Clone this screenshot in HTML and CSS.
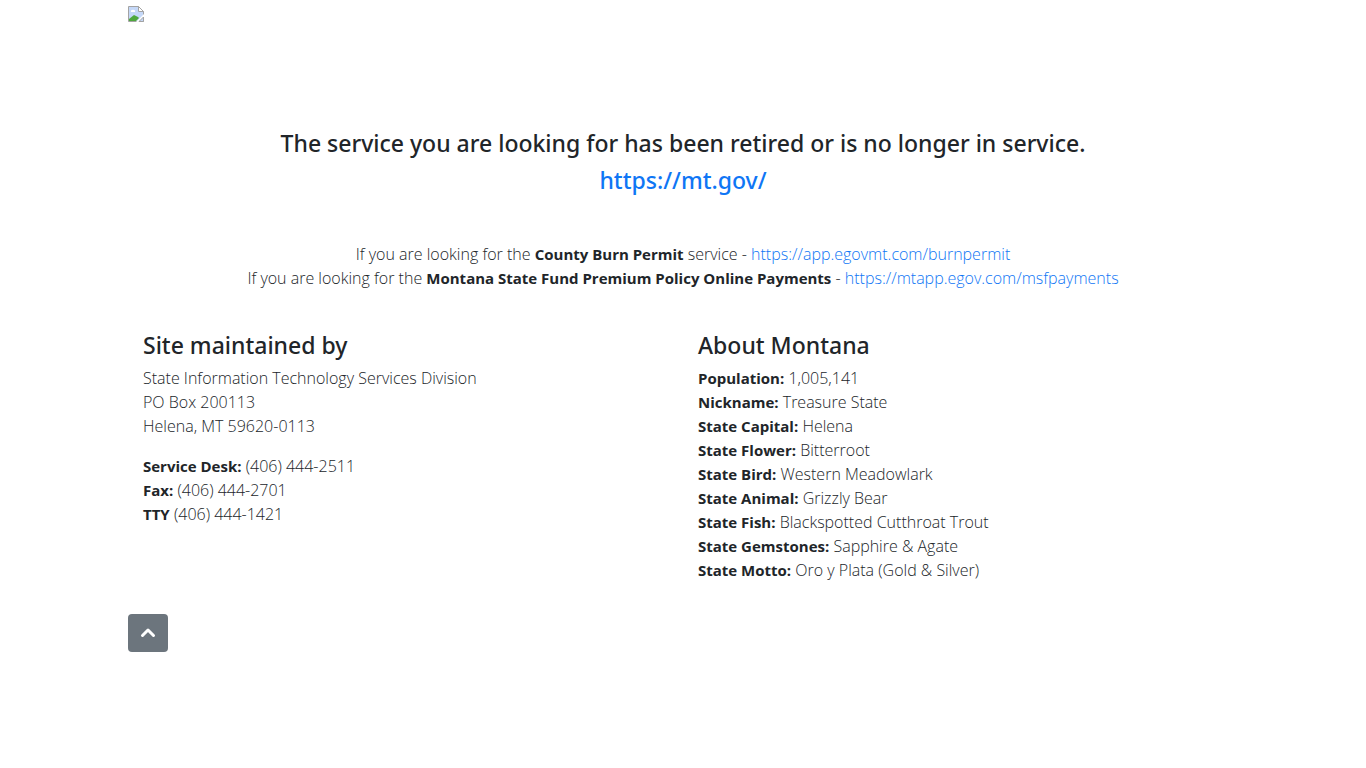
FILE: index.html
```html
<!DOCTYPE html>
<html lang="en">
<head>
	<title>Service Retired</title>
	<meta charset="utf-8">
	<meta name="viewport" content="width=device-width, initial-scale=1">
	<link rel="stylesheet" href="styles.css">
</head>
<body>
	<div class="container" id="top">
		<header class="header">
			<svg class="logo" viewBox="0 0 16 16" width="16" height="16" role="img" aria-label="Logo">
				<path d="M.5 .5h10l5 5v10H.5z" fill="#c5d8f8" stroke="#a3a3a3"/>
				<path d="M10.500 .5v5h5z" fill="#fff" stroke="#a3a3a3"/>
				<path d="M3 6a1.500 1.500 0 0 1 2-2 1.500 1.500 0 0 1 2 2z" fill="#fff"/>
				<path d="M1 15v-2l5-4 4 2 1 1-3 3z" fill="#4fa83d"/>
				<path d="M8 16l8-8v3l-5 5z" fill="#fff"/>
				<path d="M11 15.500h4.500V11z" fill="#c5d8f8" stroke="#a3a3a3"/>
			</svg>
		</header>

		<div class="message">
			<h1>The service you are looking for has been retired or is no longer in service.</h1>
			<h1><a href="https://mt.gov/">https://mt.gov/</a></h1>
		</div>

		<p class="services">
			If you are looking for the <b>County Burn Permit</b> service - <a href="https://app.egovmt.com/burnpermit">https://app.egovmt.com/burnpermit</a><br>
			If you are looking for the <b>Montana State Fund Premium Policy Online Payments</b> - <a href="https://mtapp.egov.com/msfpayments">https://mtapp.egov.com/msfpayments</a>
		</p>

		<footer class="row">
			<div class="col">
				<h2>Site maintained by</h2>
				<p>
					State Information Technology Services Division<br>
					PO Box 200113<br>
					Helena, MT 59620-0113
				</p>
				<p>
					<b>Service Desk:</b> (406) 444-2511<br>
					<b>Fax:</b> (406) 444-2701<br>
					<b>TTY</b> (406) 444-1421
				</p>
			</div>
			<div class="col">
				<h2>About Montana</h2>
				<p>
					<b>Population:</b> 1,005,141<br>
					<b>Nickname:</b> Treasure State<br>
					<b>State Capital:</b> Helena<br>
					<b>State Flower:</b> Bitterroot<br>
					<b>State Bird:</b> Western Meadowlark<br>
					<b>State Animal:</b> Grizzly Bear<br>
					<b>State Fish:</b> Blackspotted Cutthroat Trout<br>
					<b>State Gemstones:</b> Sapphire &amp; Agate<br>
					<b>State Motto:</b> Oro y Plata (Gold &amp; Silver)
				</p>
			</div>
		</footer>

		<button type="button" class="btn-top" aria-label="Back to top" onclick="window.scrollTo(0, 0)">
			<svg viewBox="0 0 16 16" width="16" height="16" aria-hidden="true">
				<path d="M2.500 10.500L8 5l5.500 5.500" fill="none" stroke="#fff" stroke-width="3" stroke-linecap="round" stroke-linejoin="round"/>
			</svg>
		</button>
	</div>
</body>
</html>
```

FILE: styles.css
```css
* {
	box-sizing: border-box;
}

body {
	margin: 0;
	font-family: "Open Sans", "Noto Sans", sans-serif;
	font-size: 16px;
	font-weight: 300;
	line-height: 24px;
	color: #212529;
	background-color: #fff;
}

a {
	color: #0f76f5;
	text-decoration: none;
}

a:hover {
	text-decoration: underline;
}

b {
	font-size: 15px;
	font-weight: 700;
}

h1, h2 {
	margin: 0 0 8px;
	font-family: "Noto Sans", "Open Sans", sans-serif;
	font-size: 23px;
	font-weight: 500;
	line-height: 29px;
}

p {
	margin: 0 0 16px;
}

.container {
	max-width: 1140px;
	margin: 0 auto;
	padding: 0 15px;
}

.header {
	padding: 6px 0 107px;
}

.logo {
	display: block;
}

.message {
	text-align: center;
	margin-bottom: 47px;
}

.services {
	text-align: center;
	margin-bottom: 41px;
}

.row {
	display: flex;
	flex-wrap: wrap;
	margin-bottom: 16px;
}

.col {
	flex: 1 1 300px;
	padding: 0 15px;
}

.row h2 {
	margin-bottom: 6px;
}

.btn-top {
	display: flex;
	align-items: center;
	justify-content: center;
	width: 40px;
	height: 38px;
	padding: 0;
	border: 0;
	border-radius: 4px;
	background-color: #6c757d;
	cursor: pointer;
}
```
